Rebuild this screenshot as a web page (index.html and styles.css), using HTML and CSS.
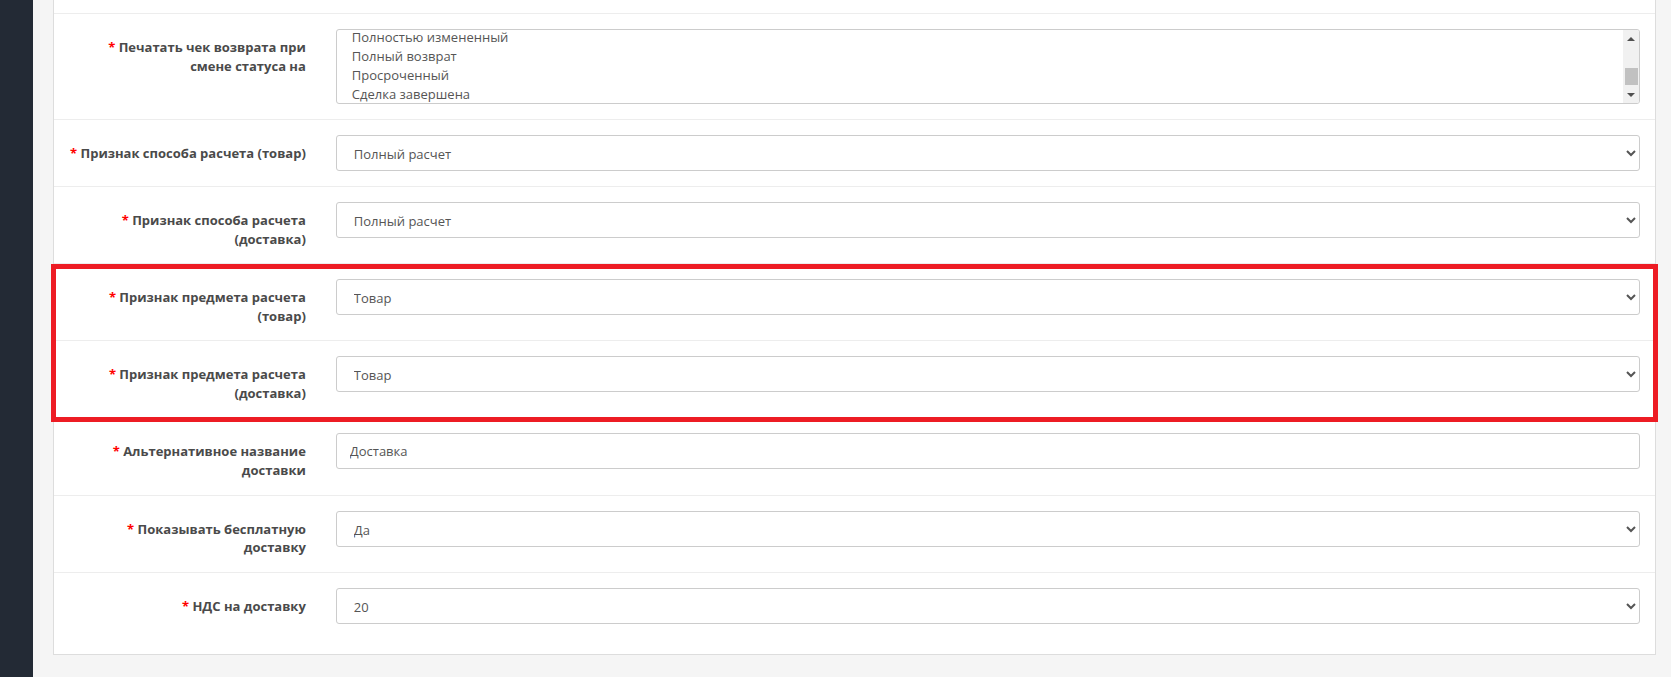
FILE: index.html
```html
<!DOCTYPE html>
<html>
<head>
    <title>Настройки чеков</title>
    <meta charset="utf-8">
    <link rel="stylesheet" href="styles.css">
</head>
<body>
    <div class="layout">
        <aside class="sidebar"></aside>
        <main class="content">
            <div class="panel">
                <div class="panel-body">
                    <form class="form-horizontal">
                        <div class="form-group required">
                            <label class="control-label">Печатать чек возврата при смене статуса на</label>
                            <div class="multi-select">
                                <div class="options">
                                    <div class="option">Полностью измененный</div>
                                    <div class="option">Полный возврат</div>
                                    <div class="option">Просроченный</div>
                                    <div class="option">Сделка завершена</div>
                                </div>
                                <div class="scrollbar">
                                    <span class="arrow arrow-up"></span>
                                    <span class="track"><span class="thumb"></span></span>
                                    <span class="arrow arrow-down"></span>
                                </div>
                            </div>
                        </div>
                        <div class="form-group required">
                            <label class="control-label">Признак способа расчета (товар)</label>
                            <select class="form-control">
                                <option>Полный расчет</option>
                            </select>
                        </div>
                        <div class="form-group required">
                            <label class="control-label">Признак способа расчета (доставка)</label>
                            <select class="form-control">
                                <option>Полный расчет</option>
                            </select>
                        </div>
                        <div class="highlight">
                            <div class="form-group required">
                                <label class="control-label">Признак предмета расчета (товар)</label>
                                <select class="form-control">
                                    <option>Товар</option>
                                </select>
                            </div>
                            <div class="form-group required">
                                <label class="control-label">Признак предмета расчета (доставка)</label>
                                <select class="form-control">
                                    <option>Товар</option>
                                </select>
                            </div>
                        </div>
                        <div class="form-group required">
                            <label class="control-label">Альтернативное название доставки</label>
                            <input type="text" class="form-control" value="Доставка">
                        </div>
                        <div class="form-group required">
                            <label class="control-label">Показывать бесплатную доставку</label>
                            <select class="form-control">
                                <option>Да</option>
                                <option>Нет</option>
                            </select>
                        </div>
                        <div class="form-group required">
                            <label class="control-label">НДС на доставку</label>
                            <select class="form-control">
                                <option>20</option>
                                <option>10</option>
                                <option>0</option>
                            </select>
                        </div>
                    </form>
                </div>
            </div>
        </main>
    </div>
</body>
</html>
```

FILE: styles.css
```css
* {
    box-sizing: border-box;
}

body {
    margin: 0;
    font-family: "Open Sans", "Liberation Sans", sans-serif;
    font-size: 13px;
    line-height: 1.42857;
    color: #555;
}

.layout {
    display: flex;
    height: 100vh;
    overflow: hidden;
}

.sidebar {
    width: 33px;
    flex-shrink: 0;
    background-color: #232a35;
}

.content {
    flex: 1;
    padding: 0 15px 0 20px;
    background-color: #f5f5f5;
}

.panel {
    background-color: #fff;
    border: 1px solid #ddd;
    border-top: none;
}

.panel-body {
    padding: 13px 0 15px;
}

.form-group {
    display: grid;
    grid-template-columns: calc((100% + 30px) / 6 - 30px) 1fr;
    column-gap: 30px;
    padding: 15px;
    border-top: 1px solid #ededed;
}

.control-label {
    padding-top: 9px;
    text-align: right;
    font-weight: bold;
    color: #4a4a4a;
}

.required .control-label:before {
    content: "* ";
    color: #f00;
    font-weight: bold;
}

.form-control {
    display: block;
    width: 100%;
    height: 36px;
    padding: 8px 13px;
    font-family: inherit;
    font-size: 13px;
    color: #555;
    background-color: #fff;
    border: 1px solid #ccc;
    border-radius: 3px;
}

/* list box with its scrollbar */
.multi-select {
    display: flex;
    height: 75px;
    border: 1px solid #ccc;
    border-radius: 3px;
    overflow: hidden;
}

.options {
    flex: 1;
    margin-top: -2px;
    padding-left: 15px;
}

.option {
    height: 19px;
    line-height: 19px;
    color: #555;
}

.scrollbar {
    display: flex;
    flex-direction: column;
    width: 16px;
    background-color: #f1f1f1;
}

.arrow {
    display: flex;
    justify-content: center;
    align-items: center;
    height: 17px;
}

.arrow:before {
    content: "";
    border-left: 4px solid transparent;
    border-right: 4px solid transparent;
}

.arrow-up:before {
    border-bottom: 4px solid #505050;
}

.arrow-down:before {
    border-top: 4px solid #505050;
}

.track {
    flex: 1;
    padding: 21px 1px 0 2px;
}

.thumb {
    display: block;
    height: 17px;
    background-color: #c1c1c1;
}

/* red frame drawn round two rows */
.highlight {
    position: relative;
}

.highlight:after {
    content: "";
    position: absolute;
    top: 1px;
    left: -3px;
    right: -3px;
    bottom: -5px;
    border: 5px solid #ed1c24;
    pointer-events: none;
}
```
